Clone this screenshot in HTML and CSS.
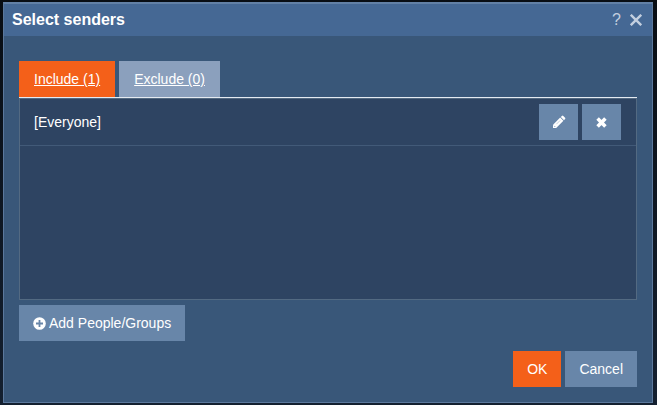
FILE: index.html
```html
<!DOCTYPE html>
<html lang="en">
<head>
    <meta charset="UTF-8">
    <meta name="viewport" content="width=device-width, initial-scale=1.0">
    <title>Select senders</title>
    <link rel="stylesheet" href="styles.css">
</head>
<body>
    <div class="dialog" role="dialog" aria-labelledby="dialog-title">
        <header class="dialog-header">
            <h1 id="dialog-title">Select senders</h1>
            <div class="dialog-tools">
                <button class="tool-button help" type="button" aria-label="Help">?</button>
                <button class="tool-button" type="button" aria-label="Close">
                    <svg width="12" height="12" viewBox="0 0 12 12" fill="none" stroke="currentColor" stroke-width="2.4">
                        <path d="M0.8 0.8L11.2 11.2M11.2 0.8L0.8 11.2"/>
                    </svg>
                </button>
            </div>
        </header>

        <div class="dialog-body">
            <nav class="tabs">
                <a href="#include" class="tab active">Include (1)</a>
                <a href="#exclude" class="tab">Exclude (0)</a>
            </nav>

            <ul class="sender-list" id="include">
                <li class="sender-row">
                    <span class="sender-name">[Everyone]</span>
                    <button class="button icon-button" type="button" aria-label="Edit">
                        <svg width="14" height="14" viewBox="0 0 14 14" fill="currentColor">
                            <path d="M1 9.8L8.2 2.6L11.4 5.8L4.2 13H1Z"/>
                            <path d="M8.8 2L9.9 0.9Q10.6 0.3 11.3 0.9L13.1 2.7Q13.7 3.4 13.1 4.1L12 5.2Z"/>
                            <path d="M2.2 10.9L3.1 11.8" stroke="#6886a9" stroke-width="0.9"/>
                            <path d="M4.4 9.2L8.2 5.4" stroke="#6886a9" stroke-width="0.4"/>
                        </svg>
                    </button>
                    <button class="button icon-button" type="button" aria-label="Remove">
                        <svg width="11" height="11" viewBox="0 0 11 11" fill="none" stroke="currentColor" stroke-width="3.6" stroke-linejoin="round">
                            <path d="M1.6 1.6L9.4 9.4M9.4 1.6L1.6 9.4"/>
                        </svg>
                    </button>
                </li>
            </ul>

            <button class="button add-button" type="button">
                <svg width="13" height="13" viewBox="0 0 13 13">
                    <circle cx="6.5" cy="6.5" r="6.3" fill="currentColor"/>
                    <path d="M6.5 3V10M3 6.5H10" stroke="#6886a9" stroke-width="1.8"/>
                </svg>
                Add People/Groups
            </button>

            <footer class="dialog-actions">
                <button class="button primary" type="button">OK</button>
                <button class="button" type="button">Cancel</button>
            </footer>
        </div>
    </div>
</body>
</html>
```

FILE: styles.css
```css
* {
    margin: 0;
    padding: 0;
    box-sizing: border-box;
}

body {
    display: flex;
    min-height: 100vh;
    padding: 2px 4px 2px 3px;
    font-family: "Liberation Sans", Arial, sans-serif;
    font-size: 14px;
    line-height: 20px;
    color: #fff;
    background: linear-gradient(#080d13, #142030);
}

.dialog {
    flex: 1;
    display: flex;
    flex-direction: column;
    background: #395779;
    border: 1px solid #5b789c;
    border-top: 2px solid #6280a5;
}

.dialog-header {
    display: flex;
    align-items: center;
    justify-content: space-between;
    height: 32px;
    padding: 0 10px 0 8px;
    background: #456894;
}

.dialog-header h1 {
    font-size: 16px;
    font-weight: 700;
}

.dialog-tools {
    display: flex;
    align-items: center;
    gap: 9px;
}

.tool-button {
    display: flex;
    border: none;
    background: none;
    color: #c3cfdf;
    cursor: pointer;
}

.help {
    font: 16px/20px "Liberation Sans", Arial, sans-serif;
}

.dialog-body {
    flex: 1;
    display: flex;
    flex-direction: column;
    padding: 25px 15px 15px;
}

.tabs {
    display: flex;
    gap: 4px;
    border-bottom: 1px solid #e4eaf1;
}

.tab {
    padding: 8px 15px;
    background: #8ba0bd;
    color: #fff;
}

.tab.active {
    background: #f46019;
}

.sender-list {
    flex: 1;
    list-style: none;
    background: #2e4462;
    border: 1px solid #536a82;
}

.sender-row {
    display: flex;
    align-items: center;
    gap: 4px;
    padding: 5px 15px 5px 14px;
    border-bottom: 1px solid #425a78;
}

.sender-name {
    flex: 1;
}

.button {
    display: flex;
    align-items: center;
    justify-content: center;
    gap: 4px;
    height: 36px;
    padding: 0 14px;
    border: none;
    background: #6886a9;
    color: #fff;
    font: inherit;
    cursor: pointer;
}

.icon-button {
    width: 39px;
    padding: 0;
}

.add-button {
    align-self: flex-start;
    gap: 3px;
    margin-top: 5px;
}

.dialog-actions {
    display: flex;
    justify-content: flex-end;
    gap: 4px;
    margin-top: 10px;
}

.primary {
    background: #f46019;
}
```
